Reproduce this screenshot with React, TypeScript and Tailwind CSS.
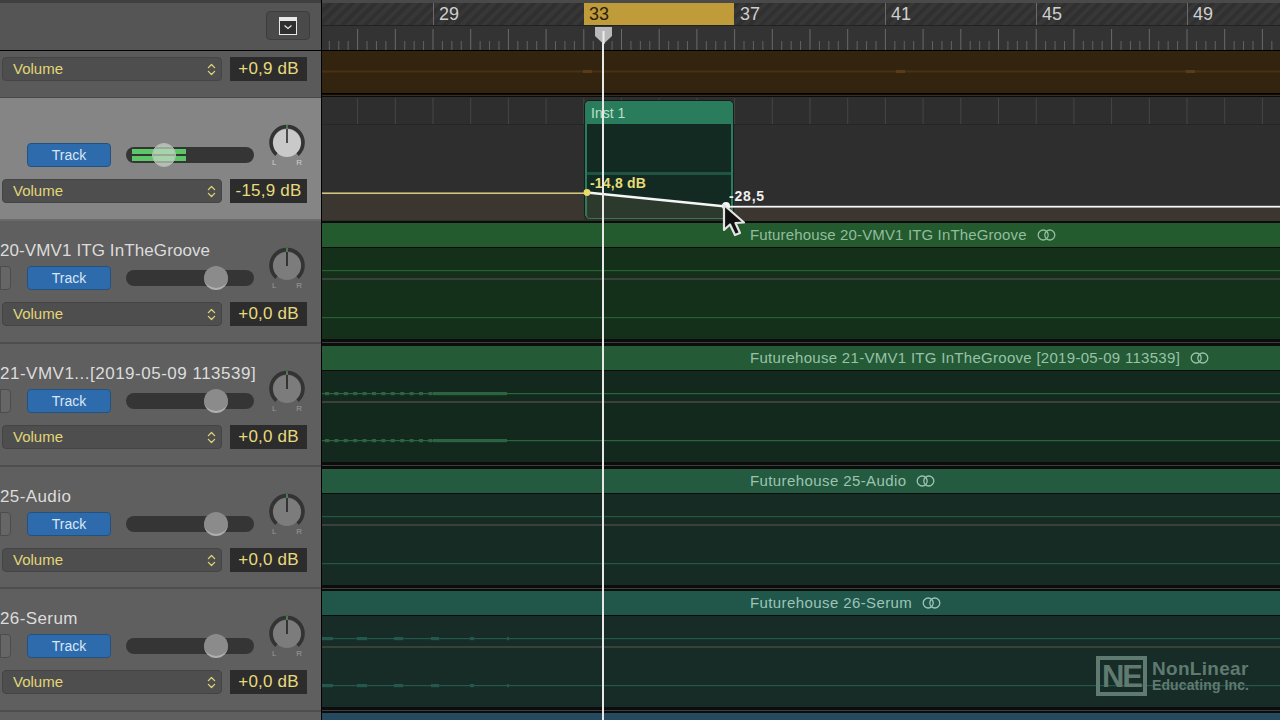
import { ChevronsUpDown } from 'lucide-react';

const BAR = 37.7;
const FIRST_BAR = 111; // x of bar 29 inside the timeline

const bars = Array.from({ length: 26 }, (_, i) => FIRST_BAR + (i - 3) * BAR);
const beats = bars.flatMap((x) => [x + BAR * 0.25, x + BAR * 0.5, x + BAR * 0.75]);

const Knob = ({ light }: { light?: boolean }) => (
  <div className="w-[38px] shrink-0 flex flex-col items-center">
    <svg width="38" height="38" viewBox="0 0 38 38">
      <circle cx="19" cy="19" r="14" fill={light ? '#c9c9c9' : '#7c7c7c'} />
      <path d="M8.4 30.6 A16 16 0 1 1 29.6 30.6" fill="none" stroke="#333333" strokeWidth="3.6" />
      <line x1="19" y1="19" x2="19" y2="5" stroke="#161616" strokeWidth="1.4" />
      <line x1="19" y1="5" x2="19" y2="1" stroke="#5fbf6a" strokeWidth="1" />
    </svg>
    <div className={`w-full flex justify-between px-[4px] -mt-[4px] text-[8px] leading-[9px] ${light ? 'text-[#d0d0d0]' : 'text-[#9a9a9a]'}`}>
      <span>L</span>
      <span>R</span>
    </div>
  </div>
);

const Slider = ({ active }: { active?: boolean }) => (
  <div className="relative ml-[15px] w-[128px] h-[16px] rounded-full bg-[#353535]">
    {active ? (
      <div className="absolute left-[6px] top-[2px] w-[54px] h-[12px] flex flex-col justify-between">
        <div className="h-[5px] bg-[#5cc766]" />
        <div className="h-[5px] bg-[#5cc766]" />
      </div>
    ) : null}
    <div
      className={
        active
          ? 'absolute left-[26px] -top-[4px] w-[24px] h-[24px] rounded-full bg-[#c8d8c8]/70 border border-[#b5b5b5]'
          : 'absolute left-[78px] -top-[4px] w-[24px] h-[24px] rounded-full bg-[#8b8b8b] border-b-2 border-[#b0b0b0]'
      }
    />
  </div>
);

const AutomationSelect = ({ value }: { value: string }) => (
  <div className="flex items-center pl-[2px]">
    <div className="w-[220px] h-[24px] rounded-[4px] bg-[#4e4e4e] border border-[#444444] flex items-center justify-between pl-[10px] pr-[2px] text-[15px] text-[#e2d677]">
      <span>Volume</span>
      <ChevronsUpDown size={15} strokeWidth={2} />
    </div>
    <div className="ml-[8px] w-[77px] h-[24px] bg-[#2c2c2c] flex items-center justify-center text-[17px] tracking-[0.2px] text-[#e6da7c]">
      {value}
    </div>
  </div>
);

const TrackHeader = ({
  name,
  value,
  height,
  selected,
  spread,
}: {
  name?: string;
  value: string;
  height: string;
  selected?: boolean;
  spread?: string;
}) => (
  <div className={`${height} shrink-0 border-b-2 ${selected ? 'bg-[#858585] border-[#6a6a6a]' : 'bg-[#5f5f5f] border-[#4e4e4e]'}`}>
    <div className="flex pt-[16px] h-[81px]">
      <div className="w-[268px] shrink-0">
        <div className={`h-[24px] text-[17px] leading-[28px] whitespace-nowrap text-[#dcdcdc] ${spread ?? ''}`}>{name}</div>
        <div className="mt-[5px] flex items-center">
          {selected ? (
            <div className="w-[11px]" />
          ) : (
            <div className="w-[11px] h-[24px] rounded-r-[4px] bg-[#666666] border border-[#4c4c4c]" />
          )}
          <div className="ml-[16px] w-[84px] h-[24px] rounded-[4px] bg-[#2e6bad] border border-[#24527f] flex items-center justify-center text-[14px] text-[#d8e6f5]">
            Track
          </div>
          <Slider active={selected} />
        </div>
      </div>
      <div className="mt-[10px]">
        <Knob light={selected} />
      </div>
    </div>
    <AutomationSelect value={value} />
  </div>
);

const LoopIcon = () => (
  <svg width="19" height="12" viewBox="0 0 19 12" fill="none" stroke="currentColor" strokeWidth="1.3" className="ml-[10px]">
    <circle cx="6.2" cy="6" r="5" />
    <circle cx="12.8" cy="6" r="5" />
  </svg>
);

const Blobs = ({ items, color, className }: { items: number[][]; color: string; className: string }) => (
  <svg width="958" height="5" className={`block shrink-0 ${className}`}>
    <rect x="0" y="2" width="958" height="1.2" fill={color} />
    {items.map(([x, w], i) => (
      <rect key={i} x={x} y="1" width={w} height="3.2" fill={color} />
    ))}
  </svg>
);

const waveA = [
  ...Array.from({ length: 12 }, (_, i) => [3 + i * 9.4, 4]),
  [111, 74],
];
const waveB = [[0, 11], [35, 10], [72, 9], [109, 8], [148, 4], [185, 2]];

const Lane = ({
  title,
  band,
  body,
  line,
  text,
  wave,
  height,
  spread,
}: {
  title: string;
  band: string;
  body: string;
  line: string;
  text: string;
  wave?: number[][];
  height?: string;
  spread: string;
}) => (
  <div className={`${height ?? 'h-[123px]'} shrink-0 bg-[#0c0c0c] pt-[1px]`}>
    <div className={`h-[24px] ${band} flex items-center pl-[428px] text-[15px] whitespace-nowrap ${text} ${spread}`}>
      {title}
      <LoopIcon />
    </div>
    <div className={`mt-[1px] h-[93px] ${body} border-b-2 border-[#0c0c0c] flex flex-col`}>
      <Blobs items={wave ?? []} color={line} className="mt-[20px]" />
      <div className="mt-[5px] h-[1.5px] shrink-0 bg-[#3a403a]" />
      <Blobs items={wave ?? []} color={line} className="mt-[35px]" />
    </div>
    <div className="mt-[1px] h-[1px] bg-[#3c3f3c]" />
  </div>
);

export default function App() {
  return (
    <div className="w-[1280px] h-[720px] overflow-hidden flex bg-black [font-family:'Liberation_Sans',Arial,sans-serif]">
      {/* track headers */}
      <aside className="w-[321px] shrink-0 flex flex-col">
        <div className="h-[51px] shrink-0 bg-[#555555] border-t-[3px] border-t-[#3f3f3f] border-b border-b-black flex items-start justify-end pr-[11px] pt-[8px]">
          <div className="w-[44px] h-[29px] rounded-[4px] bg-[#4a4a4a] border border-[#3d3d3d] flex items-center justify-center">
            <svg width="18" height="18" viewBox="0 0 18 18">
              <rect x="0.5" y="0.5" width="17" height="17" fill="#2f2f2f" stroke="#e8e8e8" />
              <rect x="0" y="0" width="18" height="4" fill="#e8e8e8" />
              <path d="M5.5 8.5 L9 11.5 L12.5 8.5" fill="none" stroke="#e8e8e8" strokeWidth="1.2" />
            </svg>
          </div>
        </div>
        <div className="h-[47px] shrink-0 pt-[6px] bg-[#5a5a5a] border-b border-[#474747]">
          <AutomationSelect value="+0,9 dB" />
        </div>
        <TrackHeader selected value="-15,9 dB" height="h-[123px]" />
        <TrackHeader name="20-VMV1 ITG InTheGroove" value="+0,0 dB" height="h-[123px]" spread="tracking-[0.1px]" />
        <TrackHeader name="21-VMV1...[2019-05-09 113539]" value="+0,0 dB" height="h-[123px]" spread="tracking-[0.5px]" />
        <TrackHeader name="25-Audio" value="+0,0 dB" height="h-[122px]" spread="tracking-[0.4px]" />
        <TrackHeader name="26-Serum" value="+0,0 dB" height="h-[123px]" spread="tracking-[0.4px]" />
        <div className="flex-1 bg-[#5f5f5f]" />
      </aside>

      {/* timeline */}
      <main className="relative ml-[1px] flex-1 flex flex-col bg-[#0c0c0c]">
        <div className="h-[51px] shrink-0 bg-[#333333] border-t-[3px] border-t-[#4a4a4a] border-b border-b-black">
          <div className="h-[23px] flex bg-[repeating-linear-gradient(135deg,#373737_0px,#373737_4px,#303030_4px,#303030_8px)] border-b border-[#222222]">
            <div className="w-[111px] shrink-0" />
            {['29', '33', '37', '41', '45', '49'].map((n) => (
              <div
                key={n}
                className={
                  n === '33'
                    ? 'w-[150px] shrink-0 pl-[5px] bg-[#bf9b39] text-[#2a2210] text-[18px] leading-[22px]'
                    : n === '37'
                      ? 'w-[151px] shrink-0 pl-[6px] text-[#cfcfcf] text-[18px] leading-[22px]'
                      : 'w-[151px] shrink-0 pl-[5px] border-l border-[#6a6a6a] text-[#cfcfcf] text-[18px] leading-[22px]'
                }
              >
                {n}
              </div>
            ))}
          </div>
          <svg width="958" height="24" className="block">
            {bars.map((x) => (
              <line key={x} x1={x} x2={x} y1="3" y2="24" stroke="#6a6a6a" />
            ))}
            {beats.map((x) => (
              <line key={x} x1={x} x2={x} y1="15" y2="24" stroke="#626262" />
            ))}
          </svg>
        </div>

        <div className="h-[46px] shrink-0">
          <div className="h-[43px] bg-[#33240f] border-b border-black">
            <svg width="958" height="42" className="block">
              <rect x="0" y="19.5" width="958" height="2" fill="#4a3115" />
              <rect x="261" y="19" width="9" height="3" fill="#5a3b1a" />
              <rect x="574" y="19" width="9" height="3" fill="#5a3b1a" />
              <rect x="864" y="19" width="9" height="3" fill="#5a3b1a" />
            </svg>
          </div>
          <div className="mt-[1px] h-[1px] bg-[#3d2b18]" />
        </div>

        {/* selected track with the automation ramp */}
        <div className="relative h-[125px] shrink-0 bg-[#2e2e2e] border-b border-[#0c0c0c]">
          <svg width="958" height="27" className="block mt-[1px] border-b border-[#262626]">
            {bars.map((x) => (
              <line key={x} x1={x} x2={x} y1="0" y2="26" stroke="#464646" />
            ))}
          </svg>
          <div className="absolute left-[262px] top-[3px] w-[150px] h-[119px] rounded-[5px] overflow-hidden bg-[#2a7d5c] border border-[#1b1b1b]">
            <div className="h-[23px] pl-[6px] text-[14px] leading-[25px] text-[#b9e0cc]">Inst 1</div>
            <div className="mx-[2px] h-[94px] bg-[#122a22]">
              <div className="h-[51px] border-b-[3px] border-[#1f5443]" />
            </div>
          </div>
          <svg width="958" height="125" className="absolute left-0 top-0">
            <rect x="0" y="97" width="262" height="26" fill="#3b362f" />
            <rect x="412" y="111" width="546" height="13" fill="#3b362f" />
            <path d="M264 96 L404 110 L409 110 L409 118 Q409 121 406 121 L268 121 Q265 121 265 118 Z" fill="#2b3a2c" />
            <path d="M264.5 98 V118 Q264.5 121.5 268 121.5 H406 Q409.5 121.5 409.5 118 V110" fill="none" stroke="#3f7358" strokeWidth="1.2" />
            <rect x="0" y="95.5" width="265" height="1.4" fill="#e8d98a" />
            <line x1="265" y1="95.5" x2="404" y2="109.5" stroke="#f6f6f6" strokeWidth="2.4" />
            <rect x="404" y="108.8" width="554" height="1.8" fill="#f6f6f6" />
            <circle cx="265" cy="95.5" r="3.4" fill="#e9dc6c" />
            <circle cx="404" cy="109" r="4" fill="#f6f6f6" />
          </svg>
          <span className="absolute left-[268px] top-[78px] text-[14px] leading-[16px] font-bold tracking-[0.2px] text-[#e8dc78]">-14,8 dB</span>
          <span className="absolute left-[407px] top-[91px] text-[14px] leading-[16px] font-bold tracking-[0.8px] text-[#f0f0f0]">-28,5</span>
        </div>

        <Lane
          title="Futurehouse 20-VMV1 ITG InTheGroove"
          band="bg-[#235a2e]"
          body="bg-[#14301a]"
          line="#2a5e33"
          text="text-[#92bd9d]"
          spread="tracking-[0.14px]"
        />
        <Lane
          title="Futurehouse 21-VMV1 ITG InTheGroove [2019-05-09 113539]"
          band="bg-[#245a35]"
          body="bg-[#13291e]"
          line="#2c6340"
          text="text-[#98c2a8]"
          wave={waveA}
          spread="tracking-[0.29px]"
        />
        <Lane
          title="Futurehouse 25-Audio"
          band="bg-[#245a40]"
          body="bg-[#162b23]"
          line="#255643"
          text="text-[#9cc4b0]"
          height="h-[122px]"
          spread="tracking-[0.4px]"
        />
        <Lane
          title="Futurehouse 26-Serum"
          band="bg-[#21574a]"
          body="bg-[#172b27]"
          line="#24584c"
          text="text-[#9cc4b8]"
          wave={waveB}
          spread="tracking-[0.4px]"
        />
        <div className="flex-1 bg-[#25495f]" />

        {/* playhead */}
        <div className="absolute left-[280px] top-[27px] bottom-0 w-[2px] bg-[#e8e8e8]" />
        <svg width="17" height="17" viewBox="0 0 17 17" className="absolute left-[272.5px] top-[27px]">
          <path d="M0 0 H17 V9 L8.5 17 L0 9 Z" fill="#b9b9bb" />
          <rect x="7.5" y="4" width="2" height="13" fill="#ededed" />
        </svg>

        {/* mouse pointer */}
        <svg width="28" height="36" viewBox="0 0 28 36" className="absolute left-[400px] top-[203px]">
          <path d="M2 2 L2 27 L8 21.5 L13 32 L18 30 L13.5 20 L22 19.5 Z" fill="#111111" stroke="#e4e4e4" strokeWidth="2.2" strokeLinejoin="round" />
        </svg>

        {/* watermark */}
        <div className="absolute left-[774px] top-[656px] flex items-center text-[#5f7a70]">
          <div className="w-[51px] h-[40px] border-4 border-[#5f7a70] flex items-center justify-center text-[31px] leading-none font-bold tracking-[-2px]">
            NE
          </div>
          <div className="ml-[5px] -mt-[1px] font-bold">
            <div className="text-[19px] leading-[18px] tracking-[0.3px]">NonLinear</div>
            <div className="text-[14px] leading-[14px] tracking-[0.1px]">Educating Inc.</div>
          </div>
        </div>
      </main>
    </div>
  );
}
